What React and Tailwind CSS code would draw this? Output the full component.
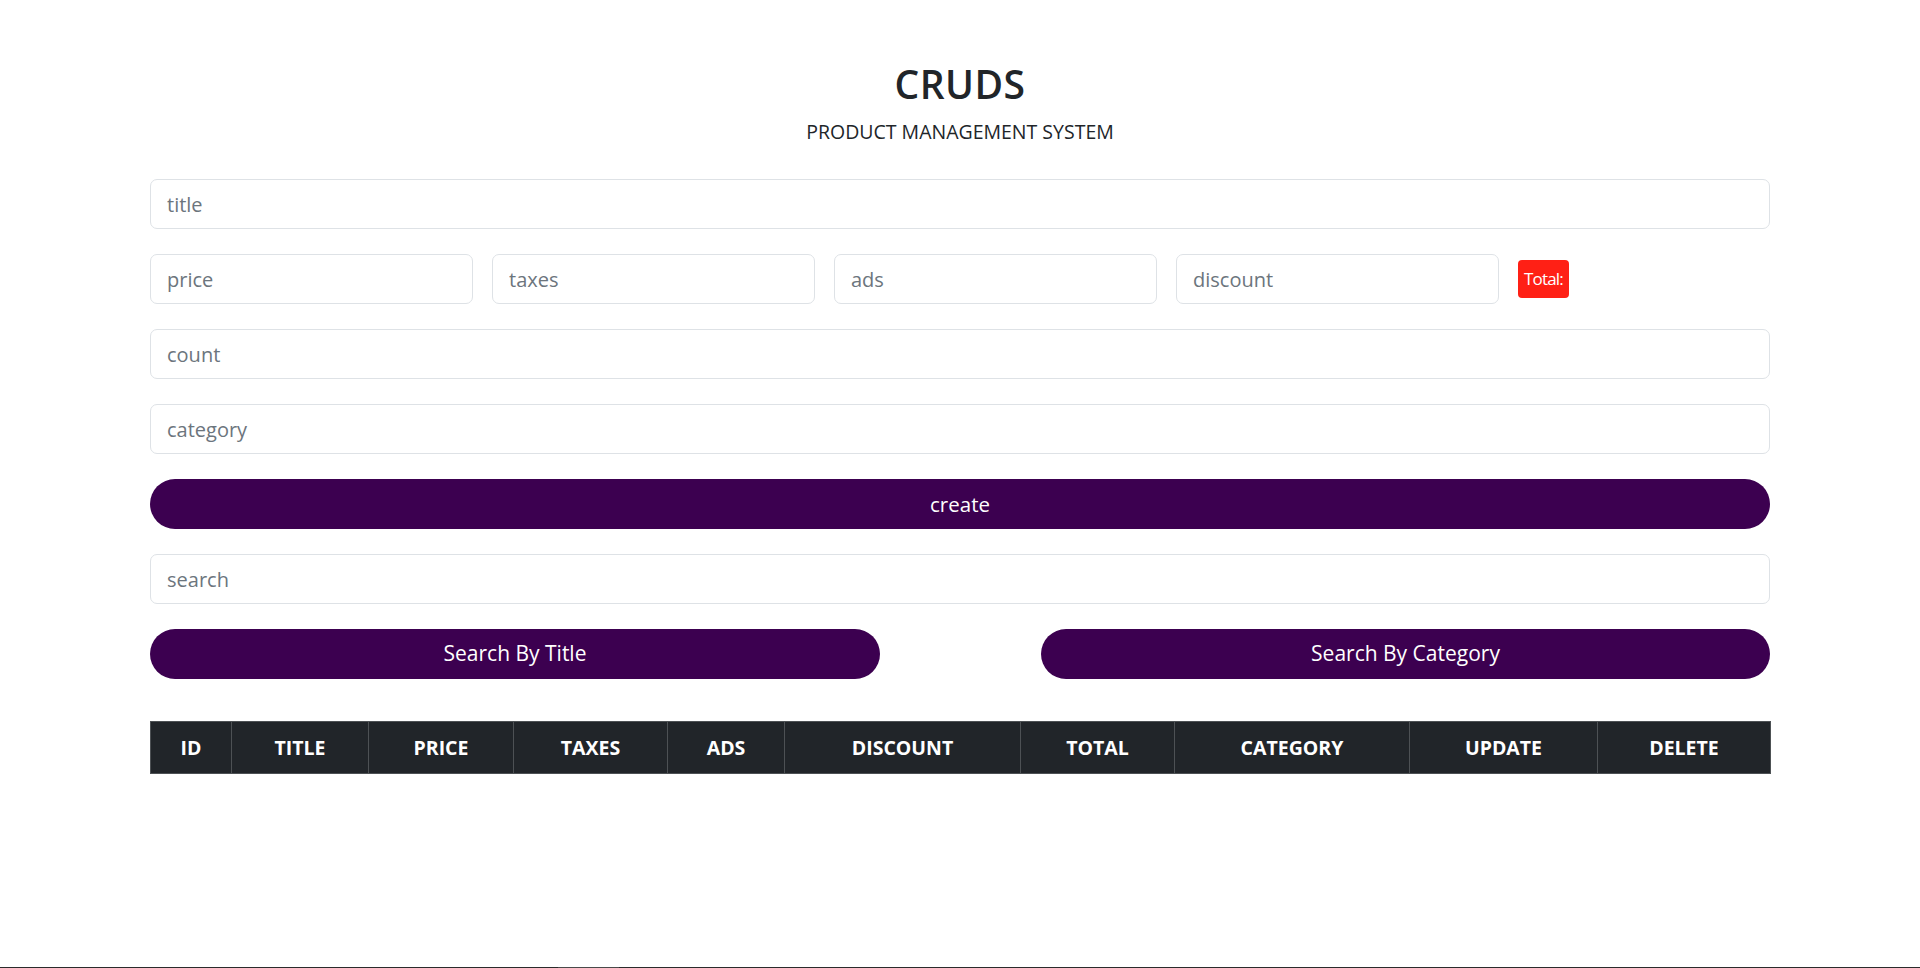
import React from "react";

const inputCls =
  "w-full h-[50px] px-4 border border-[#dee2e6] rounded-[7px] bg-white text-[20px] text-[#212529] placeholder:text-[#6c757d] outline-none";

const cols = [
  ["ID", "w-[81px]"],
  ["TITLE", "w-[137px]"],
  ["PRICE", "w-[145px]"],
  ["TAXES", "w-[154px]"],
  ["ADS", "w-[117px]"],
  ["DISCOUNT", "w-[236px]"],
  ["TOTAL", "w-[154px]"],
  ["CATEGORY", "w-[235px]"],
  ["UPDATE", "w-[188px]"],
  ["DELETE", "w-[173px]"],
];

export default function App() {
  return (
    <div
      className="min-h-[968px] flex flex-col bg-white text-[#212529]"
      style={{ fontFamily: '"Open Sans", "Noto Sans", sans-serif' }}
    >
      <div className="flex-1">
        <div className="w-[1620px] mx-auto">
          <div className="flex flex-col items-center pt-[60px]">
            <h1 className="text-[39px] font-semibold leading-[48px] tracking-[0.5px]">CRUDS</h1>
            <p className="text-[19.5px] leading-[26px] mt-[11px] text-[#212529]">PRODUCT MANAGEMENT SYSTEM</p>
          </div>

          <div className="flex flex-col gap-[25px] mt-[34px]">
            <input className={inputCls} placeholder="title" />
            <div className="flex items-center gap-[19px]">
              <input className={inputCls + " !w-[323px]"} placeholder="price" />
              <input className={inputCls + " !w-[323px]"} placeholder="taxes" />
              <input className={inputCls + " !w-[323px]"} placeholder="ads" />
              <input className={inputCls + " !w-[323px]"} placeholder="discount" />
              <span className="h-[38px] w-[51px] flex items-center justify-center rounded-[4px] bg-[#ff2015] text-white text-[17px] tracking-[-0.8px]">
                Total:
              </span>
            </div>
            <input className={inputCls} placeholder="count" />
            <input className={inputCls} placeholder="category" />
            <button className="h-[50px] w-full rounded-full bg-[#3c0050] text-white text-[20.5px]">
              create
            </button>
            <input className={inputCls} placeholder="search" />
            <div className="flex justify-between">
              <button className="h-[50px] w-[730px] rounded-full bg-[#3c0050] text-white text-[21px]">
                Search By Title
              </button>
              <button className="h-[50px] w-[729px] rounded-full bg-[#3c0050] text-white text-[21px]">
                Search By Category
              </button>
            </div>
          </div>

          <table className="mt-[42px] w-[1620px] table-fixed border-collapse">
            <thead>
              <tr className="bg-[#212529]">
                {cols.map(([c, w]) => (
                  <th
                    key={c}
                    className={
                      w +
                      " h-[52px] border border-[#4d5154] text-white text-[19.5px] font-bold text-center"
                    }
                  >
                    {c}
                  </th>
                ))}
              </tr>
            </thead>
          </table>
        </div>
      </div>
      <div className="h-px bg-[#2b2b2b] flex">
        <div className="ml-[558px] w-[61px] h-full bg-[#4a4a4a]" />
      </div>
    </div>
  );
}
